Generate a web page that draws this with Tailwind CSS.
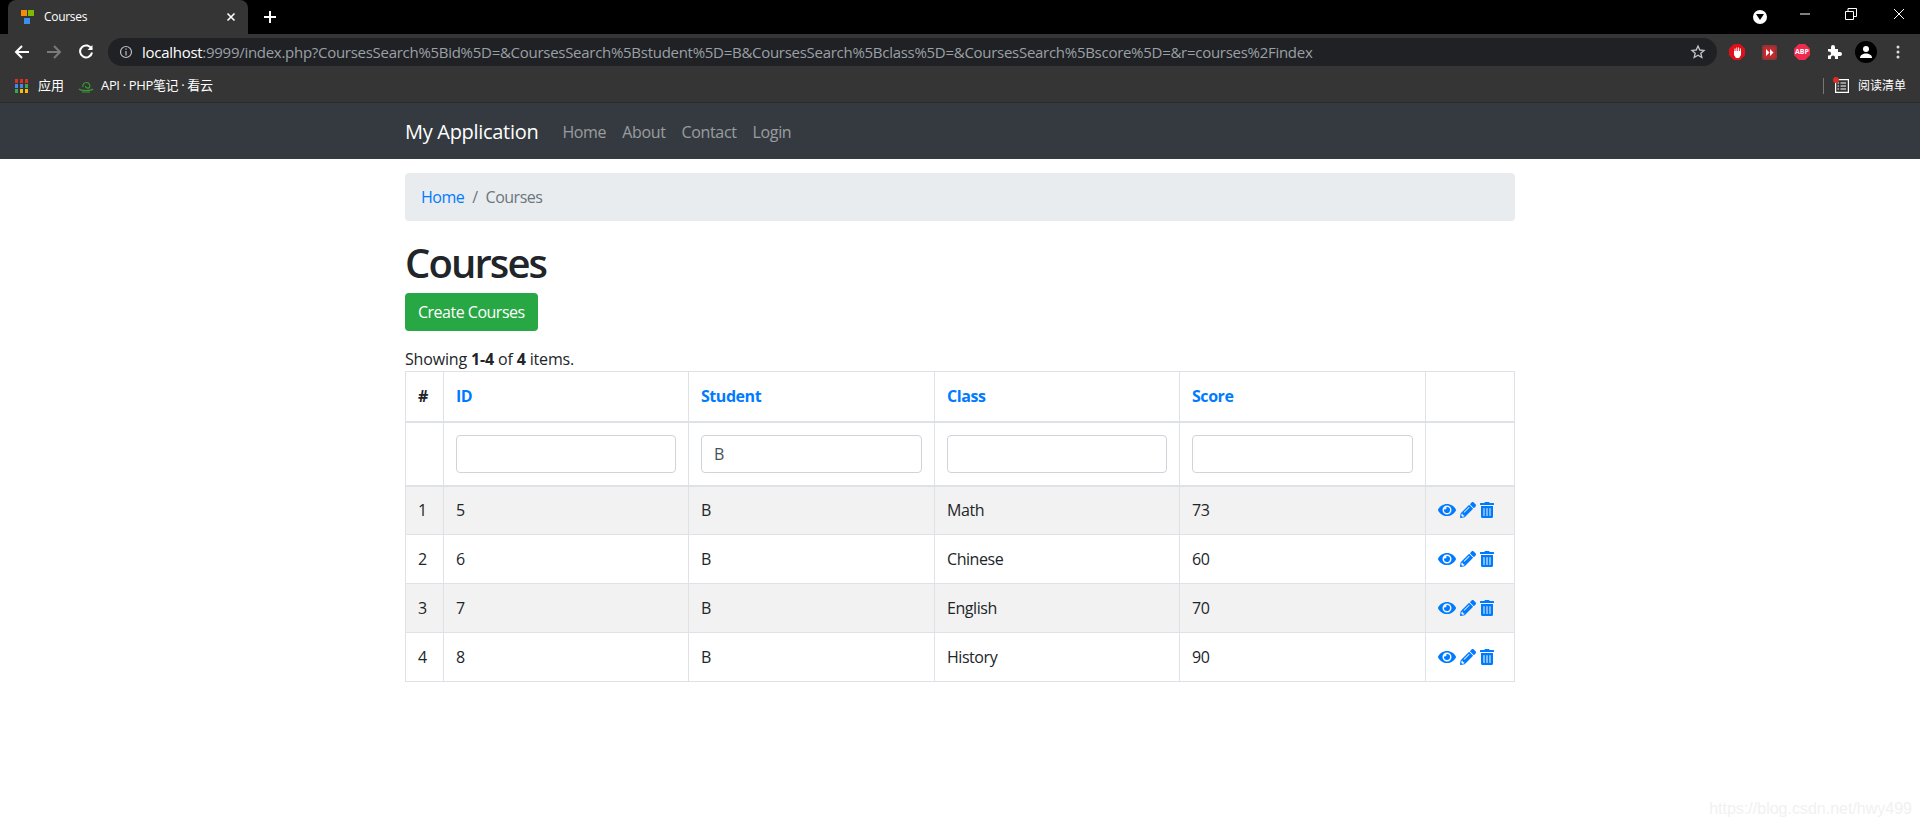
<!DOCTYPE html>
<html lang="en">

<head>
    <meta charset="UTF-8">
    <meta name="viewport" content="width=device-width, initial-scale=1.0">
    <script src="https://cdn.jsdelivr.net/npm/@tailwindcss/browser@4"></script>
    <title>Courses</title>
</head>

<body class="relative h-[831px] overflow-hidden bg-white font-['Open_Sans','Noto_Sans_CJK_SC',sans-serif] text-[#212529] text-base">
    <!--Action icons, used in every row-->
    <svg class="hidden">
        <symbol id="icon-eye" viewBox="0 0 576 512"><path d="M572.52 241.4C518.29 135.59 410.93 64 288 64S57.68 135.64 3.48 241.41a32.35 32.35 0 0 0 0 29.19C57.71 376.41 165.07 448 288 448s230.32-71.64 284.52-177.41a32.35 32.35 0 0 0 0-29.19zM288 400a144 144 0 1 1 144-144 143.93 143.93 0 0 1-144 144zm0-240a95.31 95.31 0 0 0-25.31 3.79 47.85 47.85 0 0 1-66.9 66.9A95.78 95.78 0 1 0 288 160z" /></symbol>
        <symbol id="icon-pencil" viewBox="0 0 512 512"><path d="M497.9 142.1l-46.1 46.1c-4.7 4.7-12.3 4.7-17 0l-111-111c-4.7-4.7-4.7-12.3 0-17l46.1-46.1c18.7-18.7 49.1-18.7 67.9 0l60.1 60.1c18.8 18.7 18.8 49.1 0 67.9zM284.2 99.8L21.6 362.4.4 483.9c-2.9 16.4 11.4 30.6 27.8 27.8l121.5-21.3 262.6-262.6c4.7-4.7 4.7-12.3 0-17l-111-111c-4.8-4.7-12.4-4.7-17.1 0zM124.1 339.9c-5.5-5.5-5.5-14.3 0-19.8l154-154c5.5-5.5 14.3-5.5 19.8 0s5.5 14.3 0 19.8l-154 154c-5.5 5.5-14.3 5.5-19.8 0zM88 424h48v36.3l-64.5 11.3-31.1-31.1L51.7 376H88v48z" /></symbol>
        <symbol id="icon-trash" viewBox="0 0 448 512"><path d="M32 464a48 48 0 0 0 48 48h288a48 48 0 0 0 48-48V128H32zm272-256a16 16 0 0 1 32 0v224a16 16 0 0 1-32 0zm-96 0a16 16 0 0 1 32 0v224a16 16 0 0 1-32 0zm-96 0a16 16 0 0 1 32 0v224a16 16 0 0 1-32 0zM432 32H312l-9.4-18.7A24 24 0 0 0 281.1 0H166.8a23.72 23.72 0 0 0-21.4 13.3L136 32H16A16 16 0 0 0 0 48v32a16 16 0 0 0 16 16h416a16 16 0 0 0 16-16V48a16 16 0 0 0-16-16z" /></symbol>
    </svg>

    <!--Browser tab strip-->
    <div class="flex h-[34px] items-end bg-black text-white">
        <div class="ml-2 flex h-[34px] w-[240px] items-center rounded-t-lg bg-[#353535] pl-[13px] pr-[9px]">
            <svg width="14" height="15" viewBox="0 0 14 15" class="mr-[5px] shrink-0">
                <rect x="0" y="0" width="6" height="6" fill="#f58b0a" />
                <rect x="7" y="0" width="6" height="6" fill="#7cbb00" />
                <rect x="3" y="8" width="6" height="6" fill="#3f8fe8" />
            </svg>
            <span class="ml-1 text-xs tracking-[-0.3px]">Courses</span>
            <svg width="10" height="10" viewBox="0 0 10 10" class="ml-auto mr-[3px]" stroke="white" stroke-width="1.6">
                <path d="M1.5 1.5l7 7M8.5 1.5l-7 7" />
            </svg>
        </div>
        <svg width="12" height="12" viewBox="0 0 12 12" class="mb-[11px] ml-[16px]" stroke="white" stroke-width="2">
            <path d="M6 0v12M0 6h12" />
        </svg>
        <div class="ml-auto flex h-[34px] items-center">
            <div class="mr-[32px] flex size-[14px] items-center justify-center rounded-full bg-white">
                <svg width="8" height="6" viewBox="0 0 8 6" fill="black"><path d="M0 0h8L4 6z" /></svg>
            </div>
            <svg width="12" height="12" viewBox="0 0 12 12" class="mb-[6px] mr-[34px]" stroke="white" stroke-width="1"><path d="M1 6h10" /></svg>
            <svg width="12" height="12" viewBox="0 0 12 12" class="mb-[6px] mr-[36px]" fill="none" stroke="white" stroke-width="1"><path d="M.5 3.5h8v8h-8zM3 3V.5h8.500v8H9" /></svg>
            <svg width="12" height="12" viewBox="0 0 12 12" class="mb-[6px] mr-[15px]" stroke="white" stroke-width="1"><path d="M1 1l10 10M11 1L1 11" /></svg>
        </div>
    </div>

    <!--Browser toolbar-->
    <div class="flex h-[36px] items-center bg-[#353535]">
        <svg width="16" height="16" viewBox="0 0 16 16" class="ml-[14px]" fill="none" stroke="white" stroke-width="2"><path d="M15 8H2M8 2L2 8l6 6" /></svg>
        <svg width="16" height="16" viewBox="0 0 16 16" class="ml-[16px]" fill="none" stroke="#7a7a7a" stroke-width="2"><path d="M1 8h13M8 2l6 6-6 6" /></svg>
        <svg width="16" height="16" viewBox="0 0 16 16" class="ml-[16px]" fill="none" stroke="white" stroke-width="2"><path d="M13.600 5A6 6 0 1 0 14 8.500" /><path d="M14.500 1v5h-5" fill="white" stroke="none" /></svg>
        <div class="ml-[14px] flex h-[28px] w-[1609px] items-center rounded-full bg-[#202124] pl-[11px] pr-[11px] text-[15px]">
            <svg width="14" height="14" viewBox="0 0 14 14" fill="none" stroke="#bdbdbd" stroke-width="1.200" class="mr-[9px] shrink-0">
                <circle cx="7" cy="7" r="5.500" /><path d="M7 6v4.500M7 3.500v1.300" />
            </svg>
            <span class="whitespace-nowrap tracking-[-0.28px] text-[#9aa0a6]"><span class="text-white">localhost</span>:9999/index.php?CoursesSearch%5Bid%5D=&amp;CoursesSearch%5Bstudent%5D=B&amp;CoursesSearch%5Bclass%5D=&amp;CoursesSearch%5Bscore%5D=&amp;r=courses%2Findex</span>
            <svg width="16" height="16" viewBox="0 0 24 24" class="ml-auto" fill="none" stroke="#c4c4c4" stroke-width="2"><path d="M12 3l2.700 6 6.300.6-4.800 4.200 1.500 6.400L12 16.800l-5.700 3.400 1.500-6.400L3 9.600 9.300 9z" /></svg>
        </div>
        <div class="ml-[12px] flex items-center">
            <div class="flex size-[16px] items-center justify-center bg-[#e0101a] [clip-path:polygon(30%_0,70%_0,100%_30%,100%_70%,70%_100%,30%_100%,0_70%,0_30%)]">
                <svg width="9" height="11" viewBox="0 0 9 11" fill="white"><path d="M1 4h7v4l-2 3H3L1 8z" /><path d="M1.500 1.500h1v4h-1zM3.300.5h1v4h-1zM5.100.5h1v4h-1zM6.900 1.500h1v4h-1z" /></svg>
            </div>
            <div class="ml-[17px] flex size-[15px] items-center justify-center rounded-[2px] border-2 border-[#8f3535] bg-[#c7282e]">
                <svg width="8" height="7" viewBox="0 0 8 7" fill="white"><path d="M0 0l3.500 3.500L0 7zM4 0l3.500 3.500L4 7z" /></svg>
            </div>
            <div class="ml-[17px] flex size-[16px] items-center justify-center bg-[#ee2a4f] text-[7px] font-bold text-white [clip-path:polygon(30%_0,70%_0,100%_30%,100%_70%,70%_100%,30%_100%,0_70%,0_30%)]">ABP</div>
            <svg width="16" height="16" viewBox="0 0 16 16" fill="white" class="ml-[17px]"><path d="M1 5h3V3a2 2 0 0 1 4 0v2h3v3h2a2 2 0 0 1 0 4h-2v3H8v-1.500a2 2 0 0 0-4 0V15H1v-3.500h1a2 2 0 0 0 0-4H1z" /></svg>
            <div class="ml-[12px] flex size-[22px] items-center justify-center rounded-full bg-black">
                <svg width="14" height="14" viewBox="0 0 14 14" fill="white"><circle cx="7" cy="4" r="3" /><path d="M1 13c0-3 3-4.500 6-4.500s6 1.500 6 4.500z" /></svg>
            </div>
            <svg width="4" height="14" viewBox="0 0 4 14" fill="#dcdcdc" class="ml-[19px]"><circle cx="2" cy="2" r="1.500" /><circle cx="2" cy="7" r="1.500" /><circle cx="2" cy="12" r="1.500" /></svg>
        </div>
    </div>

    <!--Bookmarks bar-->
    <div class="flex h-[33px] items-center border-b border-[#2a2a2a] bg-[#353535] pl-[15px] text-[13px] text-white">
        <svg width="13" height="14" viewBox="0 0 13 14" class="mr-[10px]">
            <path fill="#d93025" d="M0 0h3v4H0zM5 0h3v4H5zM10 0h3v4h-3z" />
            <path fill="#4285f4" d="M0 5h3v4H0zM5 5h3v4H5z" /><path fill="#34a853" d="M10 5h3v4h-3zM0 10h3v4H0z" />
            <path fill="#fbbc05" d="M5 10h3v4H5zM10 10h3v4h-3z" />
        </svg>
        <span>应用</span>
        <svg width="16" height="14" viewBox="0 0 16 14" class="ml-[14px] mr-[7px]" fill="none" stroke="#3a9b35" stroke-width="1.200"><path d="M5 8a3.500 3.500 0 1 1 6.500.5C10.500 9.500 7 9 7.500 7M1 10c2 2 12 2 14 0M4 13h8" /></svg>
        <span class="tracking-[-0.35px]">API · PHP笔记 · 看云</span>
        <div class="ml-auto mr-[14px] flex items-center text-xs">
            <div class="mr-[11px] h-[16px] w-px bg-[#777]"></div>
            <div class="relative mr-[9px]">
                <svg width="14" height="14" viewBox="0 0 14 14" fill="none" stroke="white" stroke-width="1.200"><path d="M.6.6h12.800v12.800H.6zM5.500 4H11M5.500 7H11M5.500 10H11" /><path d="M2.500 4h1.500M2.500 7h1.500M2.500 10h1.500" /></svg>
                <div class="absolute -left-[2px] -top-[2px] size-[6px] rounded-full bg-[#d93025]"></div>
            </div>
            <span>阅读清单</span>
        </div>
    </div>

    <!--Navbar-->
    <nav class="h-[56px] bg-[#343a40] pt-px">
        <div class="mx-auto flex h-full w-[1110px] items-center">
            <a class="mr-6 text-xl tracking-[-0.3px] text-white">My Application</a>
            <ul class="flex gap-4 tracking-[-0.35px] text-white/50">
                <li>Home</li>
                <li>About</li>
                <li>Contact</li>
                <li>Login</li>
            </ul>
        </div>
    </nav>

    <main class="mx-auto w-[1110px] pt-[14px]">
        <ul class="mb-4 flex h-[48px] items-center rounded bg-[#e9ecef] px-4 tracking-[-0.5px]">
            <li class="text-[#007bff]">Home</li>
            <li class="px-2 text-[#6c757d]">/</li>
            <li class="text-[#6c757d]">Courses</li>
        </ul>

        <h1 class="mb-[6px] pt-[2px] text-[40px] font-semibold leading-[48px] tracking-[-1.9px]">Courses</h1>

        <p class="mb-4">
            <a class="inline-flex h-[38px] items-center rounded bg-[#28a745] px-[13px] tracking-[-0.5px] text-white">Create Courses</a>
        </p>

        <div class="h-6 leading-6 tracking-[-0.16px]">Showing <b>1-4</b> of <b>4</b> items.</div>

        <table class="w-full table-fixed border-collapse border border-[#dee2e6] tracking-[-0.45px]">
            <colgroup>
                <col class="w-[38px]">
                <col class="w-[245px]">
                <col class="w-[246px]">
                <col class="w-[245px]">
                <col class="w-[246px]">
                <col>
            </colgroup>
            <thead>
                <tr class="h-[50px] border-b-2 border-[#dee2e6] text-left font-bold">
                    <th class="border border-[#dee2e6] px-3 text-[#212529]">#</th>
                    <th class="border border-[#dee2e6] px-3 text-[#007bff]">ID</th>
                    <th class="border border-[#dee2e6] px-3 text-[#007bff]">Student</th>
                    <th class="border border-[#dee2e6] px-3 text-[#007bff]">Class</th>
                    <th class="border border-[#dee2e6] px-3 text-[#007bff]">Score</th>
                    <th class="border border-[#dee2e6] px-3"></th>
                </tr>
                <tr class="h-[64px] border-b-2 border-[#dee2e6]">
                    <td class="border border-[#dee2e6] px-3"></td>
                    <td class="border border-[#dee2e6] px-3"><input type="text" class="h-[38px] w-full rounded border border-[#ced4da] px-3 text-[#495057]"></td>
                    <td class="border border-[#dee2e6] px-3"><input type="text" value="B" class="h-[38px] w-full rounded border border-[#ced4da] px-3 text-[#495057]"></td>
                    <td class="border border-[#dee2e6] px-3"><input type="text" class="h-[38px] w-full rounded border border-[#ced4da] px-3 text-[#495057]"></td>
                    <td class="border border-[#dee2e6] px-3"><input type="text" class="h-[38px] w-full rounded border border-[#ced4da] px-3 text-[#495057]"></td>
                    <td class="border border-[#dee2e6] px-3"></td>
                </tr>
            </thead>
            <tbody>
                <tr class="h-[49px] bg-[#f2f2f2]">
                    <td class="border border-[#dee2e6] px-3">1</td>
                    <td class="border border-[#dee2e6] px-3">5</td>
                    <td class="border border-[#dee2e6] px-3">B</td>
                    <td class="border border-[#dee2e6] px-3">Math</td>
                    <td class="border border-[#dee2e6] px-3">73</td>
                    <td class="border border-[#dee2e6] px-3">
                        <div class="flex items-center gap-[4px] text-[#007bff]">
                            <svg width="18" height="16" fill="currentColor"><use href="#icon-eye" /></svg>
                            <svg width="16" height="16" fill="currentColor"><use href="#icon-pencil" /></svg>
                            <svg width="14" height="16" fill="currentColor"><use href="#icon-trash" /></svg>
                        </div>
                    </td>
                </tr>
                <tr class="h-[49px]">
                    <td class="border border-[#dee2e6] px-3">2</td>
                    <td class="border border-[#dee2e6] px-3">6</td>
                    <td class="border border-[#dee2e6] px-3">B</td>
                    <td class="border border-[#dee2e6] px-3">Chinese</td>
                    <td class="border border-[#dee2e6] px-3">60</td>
                    <td class="border border-[#dee2e6] px-3">
                        <div class="flex items-center gap-[4px] text-[#007bff]">
                            <svg width="18" height="16" fill="currentColor"><use href="#icon-eye" /></svg>
                            <svg width="16" height="16" fill="currentColor"><use href="#icon-pencil" /></svg>
                            <svg width="14" height="16" fill="currentColor"><use href="#icon-trash" /></svg>
                        </div>
                    </td>
                </tr>
                <tr class="h-[49px] bg-[#f2f2f2]">
                    <td class="border border-[#dee2e6] px-3">3</td>
                    <td class="border border-[#dee2e6] px-3">7</td>
                    <td class="border border-[#dee2e6] px-3">B</td>
                    <td class="border border-[#dee2e6] px-3">English</td>
                    <td class="border border-[#dee2e6] px-3">70</td>
                    <td class="border border-[#dee2e6] px-3">
                        <div class="flex items-center gap-[4px] text-[#007bff]">
                            <svg width="18" height="16" fill="currentColor"><use href="#icon-eye" /></svg>
                            <svg width="16" height="16" fill="currentColor"><use href="#icon-pencil" /></svg>
                            <svg width="14" height="16" fill="currentColor"><use href="#icon-trash" /></svg>
                        </div>
                    </td>
                </tr>
                <tr class="h-[49px]">
                    <td class="border border-[#dee2e6] px-3">4</td>
                    <td class="border border-[#dee2e6] px-3">8</td>
                    <td class="border border-[#dee2e6] px-3">B</td>
                    <td class="border border-[#dee2e6] px-3">History</td>
                    <td class="border border-[#dee2e6] px-3">90</td>
                    <td class="border border-[#dee2e6] px-3">
                        <div class="flex items-center gap-[4px] text-[#007bff]">
                            <svg width="18" height="16" fill="currentColor"><use href="#icon-eye" /></svg>
                            <svg width="16" height="16" fill="currentColor"><use href="#icon-pencil" /></svg>
                            <svg width="14" height="16" fill="currentColor"><use href="#icon-trash" /></svg>
                        </div>
                    </td>
                </tr>
            </tbody>
        </table>
    </main>

    <!--CSDN watermark-->
    <div class="absolute bottom-[10px] right-[8px] font-['Liberation_Sans',sans-serif] text-base text-[#f1f1f1]">https://blog.csdn.net/hwy499</div>
</body>

</html>
